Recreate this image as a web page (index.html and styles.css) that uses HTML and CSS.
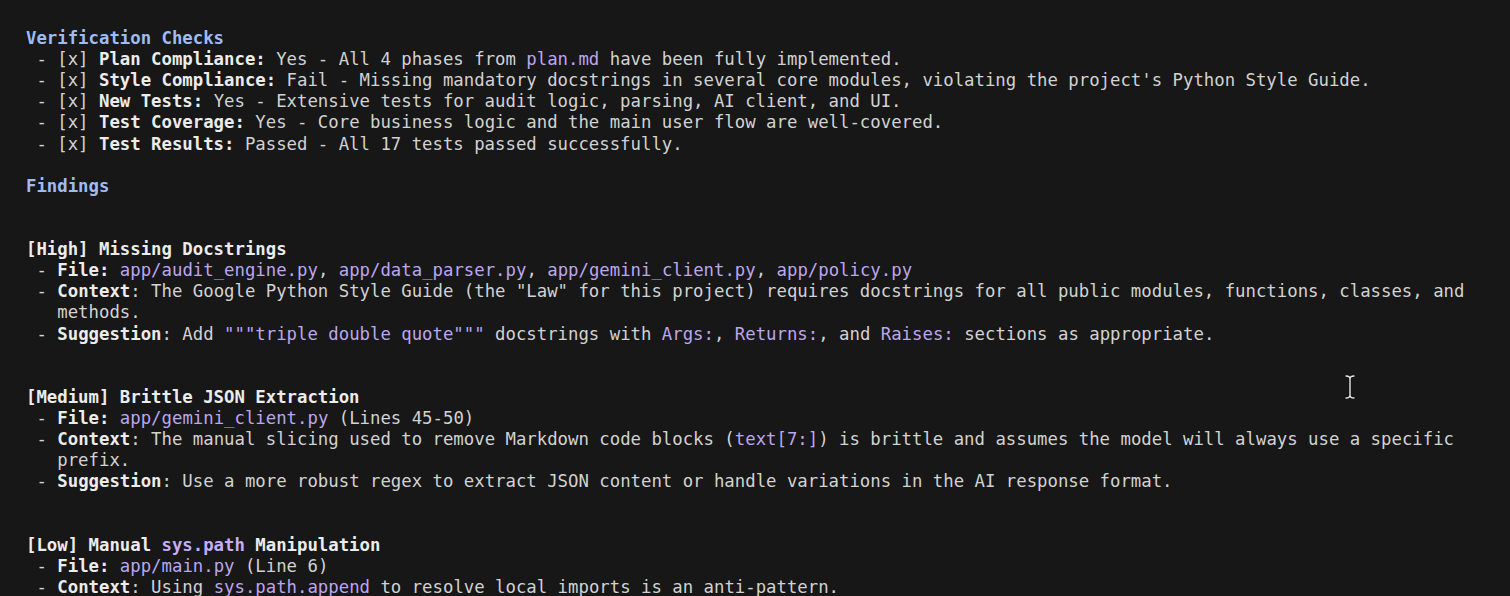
FILE: index.html
```html
<!DOCTYPE html>
<html>
<head>
<meta charset="utf-8">
<link rel="stylesheet" href="styles.css">
</head>
<body>
<div class="term">
<div class="ln h">Verification Checks</div>
<div class="ln"> - [x] <b>Plan Compliance:</b> Yes - All 4 phases from <span class="p">plan.md</span> have been fully implemented.</div>
<div class="ln"> - [x] <b>Style Compliance:</b> Fail - Missing mandatory docstrings in several core modules, violating the project's Python Style Guide.</div>
<div class="ln"> - [x] <b>New Tests:</b> Yes - Extensive tests for audit logic, parsing, AI client, and UI.</div>
<div class="ln"> - [x] <b>Test Coverage:</b> Yes - Core business logic and the main user flow are well-covered.</div>
<div class="ln"> - [x] <b>Test Results:</b> Passed - All 17 tests passed successfully.</div>
<div class="ln"> </div>
<div class="ln h">Findings</div>
<div class="ln"> </div>
<div class="ln"> </div>
<div class="ln"><b>[High] Missing Docstrings</b></div>
<div class="ln"> - <b>File:</b> <span class="p">app/audit_engine.py</span>, <span class="p">app/data_parser.py</span>, <span class="p">app/gemini_client.py</span>, <span class="p">app/policy.py</span></div>
<div class="ln"> - <b>Context</b>: The Google Python Style Guide (the "Law" for this project) requires docstrings for all public modules, functions, classes, and</div>
<div class="ln">   methods.</div>
<div class="ln"> - <b>Suggestion</b>: Add <span class="p">"""triple double quote"""</span> docstrings with <span class="p">Args:</span>, <span class="p">Returns:</span>, and <span class="p">Raises:</span> sections as appropriate.</div>
<div class="ln"> </div>
<div class="ln"> </div>
<div class="ln"><b>[Medium] Brittle JSON Extraction</b></div>
<div class="ln"> - <b>File:</b> <span class="p">app/gemini_client.py</span> (Lines 45-50)</div>
<div class="ln"> - <b>Context</b>: The manual slicing used to remove Markdown code blocks (<span class="p">text[7:]</span>) is brittle and assumes the model will always use a specific</div>
<div class="ln">   prefix.</div>
<div class="ln"> - <b>Suggestion</b>: Use a more robust regex to extract JSON content or handle variations in the AI response format.</div>
<div class="ln"> </div>
<div class="ln"> </div>
<div class="ln"><b>[Low] Manual <span class="p">sys.path</span> Manipulation</b></div>
<div class="ln"> - <b>File:</b> <span class="p">app/main.py</span> (Line 6)</div>
<div class="ln"> - <b>Context</b>: Using <span class="p">sys.path.append</span> to resolve local imports is an anti-pattern.</div>
</div>
<svg class="cursor" width="12" height="26" viewBox="0 0 12 26">
  <path d="M2 2 Q6 2 6 5 Q6 2 10 2 M6 5 V21 M2 24 Q6 24 6 21 Q6 24 10 24" fill="none" stroke="#111" stroke-width="3.2" stroke-linecap="round"/>
  <path d="M2 2 Q6 2 6 5 Q6 2 10 2 M6 5 V21 M2 24 Q6 24 6 21 Q6 24 10 24" fill="none" stroke="#e8e8e8" stroke-width="1.4" stroke-linecap="round"/>
</svg>
</body>
</html>
```

FILE: styles.css
```css
html, body {
  margin: 0;
  padding: 0;
  background: #171717;
  height: 100%;
  overflow: hidden;
}
.term {
  padding: 28px 0 0 26px;
  font-family: "DejaVu Sans Mono", "Liberation Mono", monospace;
  font-size: 17.32px;
  line-height: 21.12px;
  color: #d2d2d2;
}
.ln {
  white-space: pre;
  height: 21.12px;
}
.ln b {
  font-weight: bold;
  color: #ececec;
}
.h {
  color: #9dbcf4;
  font-weight: bold;
}
.p {
  color: #bca6ef;
}
.ln b .p {
  color: #c4aef5;
}
.cursor {
  position: absolute;
  left: 1344px;
  top: 374px;
}
```
